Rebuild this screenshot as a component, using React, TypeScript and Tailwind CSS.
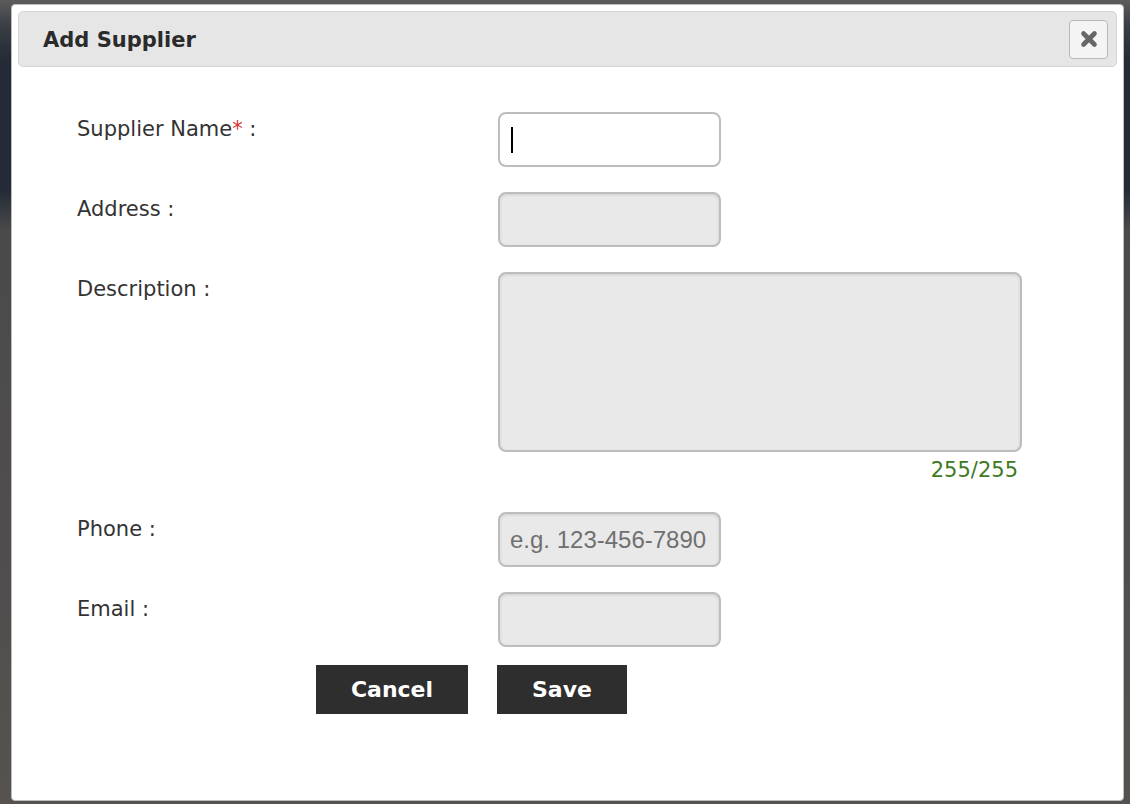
import React from "react";

const labelFont = { fontFamily: "Tahoma, 'DejaVu Sans', Verdana, sans-serif" };

function Label({ children }: { children: React.ReactNode }) {
  return (
    <div className="pt-[5px] text-[21px] leading-[24px] text-[#333]" style={labelFont}>
      {children}
    </div>
  );
}

const inputCls =
  "w-[223px] h-[55px] rounded-[8px] border-2 border-[#bdbdbd] bg-[#e9e9e9] shadow-[inset_0_1px_3px_rgba(0,0,0,0.12)] outline-none px-[10px] text-[24px] text-[#555] placeholder:text-[#707070]";

export default function App() {
  return (
    <div className="w-[1130px] h-[804px] overflow-hidden bg-[linear-gradient(to_bottom,#5c5c5c_0px,#3a3f45_25px,#232b36_60px,#232b36_190px,#4a4a4a_230px,#55524f_100%)] pt-[4px] pl-[11px] pr-[6px] pb-[3px]">
      <div className="w-[1113px] h-[797px] bg-white border border-[#bcbcbc] rounded-[4px] p-[6px] flex flex-col">
        <div className="h-[56px] rounded-[5px] border border-[#d4d4d4] bg-[#e6e6e6] flex items-center justify-between pl-[24px] pr-[8px]">
          <div
            className="text-[21px] font-bold text-[#2b2b2b] leading-none pt-[2px]"
            style={{ fontFamily: "Tahoma, 'DejaVu Sans', Verdana, sans-serif" }}
          >
            Add Supplier
          </div>
          <button className="w-[39px] h-[39px] rounded-[4px] border border-[#b8b8b8] bg-[#f4f4f4] flex items-center justify-center">
            <svg width="20" height="20" viewBox="0 0 20 20">
              <path d="M4.5 4.5 L15.5 15.5 M15.5 4.5 L4.5 15.5" stroke="#666" strokeWidth="4.6" strokeLinecap="round" />
            </svg>
          </button>
        </div>

        <div className="pl-[59px] pt-[45px] grid grid-cols-[421px_1fr] gap-y-[25px]">
          <Label>
            Supplier Name<span className="text-[#d32f2f]">*</span> :
          </Label>
          <div>
            <div className="w-[223px] h-[55px] rounded-[8px] border-2 border-[#bdbdbd] bg-white flex items-center pl-[11px]">
              <div className="w-[2px] h-[26px] bg-black" />
            </div>
          </div>

          <Label>Address :</Label>
          <div>
            <input className={inputCls} />
          </div>

          <Label>Description :</Label>
          <div className="flex flex-col w-[524px]">
            <textarea className="w-[524px] h-[180px] rounded-[8px] border-2 border-[#bdbdbd] bg-[#e9e9e9] shadow-[inset_0_1px_3px_rgba(0,0,0,0.12)] outline-none resize-none" />
            <div
              className="text-right pr-[4px] mt-[6px] mb-[5px] text-[21px] leading-[24px] text-[#3d7a22]"
              style={labelFont}
            >
              255/255
            </div>
          </div>

          <Label>Phone :</Label>
          <div>
            <input
              className={inputCls}
              placeholder="e.g. 123-456-7890"
              style={{ fontFamily: "'Liberation Sans', Arial, sans-serif" }}
            />
          </div>

          <Label>Email :</Label>
          <div>
            <input className={inputCls} />
          </div>
        </div>

        <div className="flex pl-[298px] gap-[29px] mt-[18px]">
          <button
            className="w-[152px] h-[49px] bg-[#2e2e2e] text-white text-[22px] font-bold"
            style={labelFont}
          >
            Cancel
          </button>
          <button
            className="w-[130px] h-[49px] bg-[#2e2e2e] text-white text-[22px] font-bold"
            style={labelFont}
          >
            Save
          </button>
        </div>
      </div>
    </div>
  );
}
